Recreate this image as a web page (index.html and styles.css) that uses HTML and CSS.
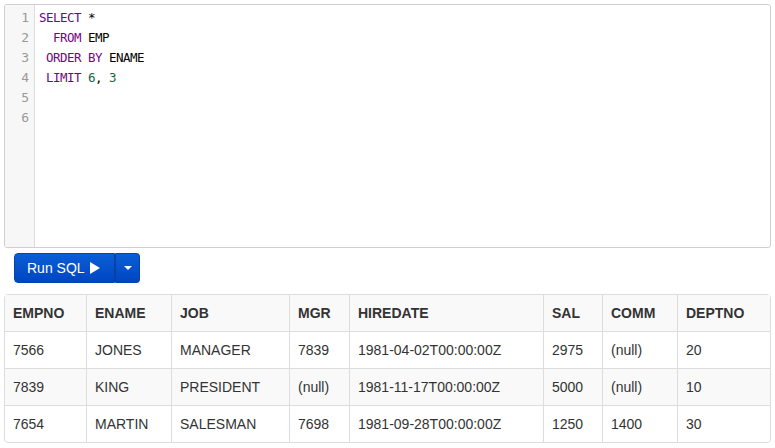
FILE: index.html
```html
<!DOCTYPE html>
<html>
<head>
<meta charset="utf-8">
<link rel="stylesheet" href="styles.css">
</head>
<body>
<div class="editor">
  <div class="gutter">
    <div>1</div><div>2</div><div>3</div><div>4</div><div>5</div><div>6</div>
  </div>
  <div class="code">
    <div class="line"><span class="kw">SELECT</span> *</div>
    <div class="line">  <span class="kw">FROM</span> EMP</div>
    <div class="line"> <span class="kw">ORDER</span> <span class="kw">BY</span> ENAME</div>
    <div class="line"> <span class="kw">LIMIT</span> <span class="num">6</span>, <span class="num">3</span></div>
    <div class="line"> </div>
    <div class="line"> </div>
  </div>
</div>
<div class="toolbar">
  <div class="btn-group">
    <button class="btn btn-main">Run SQL <span class="play"></span></button>
    <button class="btn btn-drop"><span class="caret"></span></button>
  </div>
</div>
<table class="results">
  <colgroup>
    <col class="c1"><col class="c2"><col class="c3"><col class="c4"><col class="c5"><col class="c6"><col class="c7"><col class="c8">
  </colgroup>
  <thead>
    <tr><th>EMPNO</th><th>ENAME</th><th>JOB</th><th>MGR</th><th>HIREDATE</th><th>SAL</th><th>COMM</th><th>DEPTNO</th></tr>
  </thead>
  <tbody>
    <tr><td>7566</td><td>JONES</td><td>MANAGER</td><td>7839</td><td>1981-04-02T00:00:00Z</td><td>2975</td><td>(null)</td><td>20</td></tr>
    <tr class="odd"><td>7839</td><td>KING</td><td>PRESIDENT</td><td>(null)</td><td>1981-11-17T00:00:00Z</td><td>5000</td><td>(null)</td><td>10</td></tr>
    <tr><td>7654</td><td>MARTIN</td><td>SALESMAN</td><td>7698</td><td>1981-09-28T00:00:00Z</td><td>1250</td><td>1400</td><td>30</td></tr>
  </tbody>
</table>
</body>
</html>
```
FILE: styles.css
```css
html, body {
  margin: 0;
  padding: 0;
  background: #fff;
}
body {
  padding: 4px 4px 0 4px;
  font-family: "Liberation Sans", Arial, sans-serif;
  font-size: 14px;
  color: #333;
}
.editor {
  display: flex;
  width: 767px;
  box-sizing: border-box;
  height: 244px;
  border: 1px solid #cfcfcf;
  border-radius: 3px;
  overflow: hidden;
  font-family: "DejaVu Sans Mono", monospace;
  font-size: 12.5px;
  line-height: 20px;
}
.gutter {
  width: 30px;
  flex: none;
  background: #f7f7f7;
  border-right: 1px solid #dddddd;
  color: #999;
  text-align: right;
  padding-top: 3px;
  box-sizing: border-box;
  font-size: 13px;
}
.gutter div {
  padding-right: 5px;
}
.code {
  padding: 3px 0 0 4px;
  color: #000;
  letter-spacing: -0.52px;
}
.line {
  white-space: pre;
  height: 20px;
}
.kw { color: #770088; }
.num { color: #116644; }

.toolbar {
  padding: 5px 0 0 10px;
  height: 30px;
}
.btn-group {
  display: inline-flex;
  height: 30px;
}
.btn {
  border: 1px solid #0044b0;
  background: linear-gradient(#0a5ed6, #0045c2);
  color: #fff;
  font-family: "Liberation Sans", Arial, sans-serif;
  font-size: 14px;
  height: 30px;
  margin: 0;
  display: flex;
  align-items: center;
  cursor: pointer;
}
.btn-main {
  border-radius: 4px 0 0 4px;
  width: 101px;
  padding: 0 0 0 12px;
}
.btn-drop {
  border-radius: 0 4px 4px 0;
  border-left: 1px solid #0a3f9c;
  width: 25px;
  justify-content: center;
  padding: 0;
}
.play {
  display: inline-block;
  margin-left: 5px;
  width: 0;
  height: 0;
  border-top: 6px solid transparent;
  border-bottom: 6px solid transparent;
  border-left: 10px solid #fff;
}
.caret {
  display: inline-block;
  width: 0;
  height: 0;
  border-left: 4px solid transparent;
  border-right: 4px solid transparent;
  border-top: 4px solid #fff;
}

.results {
  margin-top: 11px;
  width: 767px;
  table-layout: fixed;
  border-collapse: separate;
  border-spacing: 0;
  border: 1px solid #dddddd;
  border-radius: 4px;
  line-height: 20px;
}
.c1 { width: 81px; }
.c2 { width: 85px; }
.c3 { width: 118px; }
.c4 { width: 60px; }
.c5 { width: 194px; }
.c6 { width: 59px; }
.c7 { width: 75px; }
.c8 { width: 93px; }
.results th, .results td {
  padding: 8px;
  text-align: left;
  border-left: 1px solid #dddddd;
  border-top: 1px solid #dddddd;
  white-space: nowrap;
}
.results th:first-child, .results td:first-child {
  border-left: none;
}
.results thead th {
  border-top: none;
  font-weight: bold;
  background: #f9f9f9;
}
.results tr.odd td {
  background: #f9f9f9;
}
```
